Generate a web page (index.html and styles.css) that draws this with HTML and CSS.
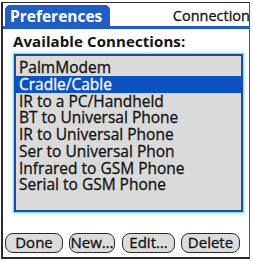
FILE: index.html
```html
<!DOCTYPE html>
<html>
<head>
<meta charset="utf-8">
<link rel="stylesheet" href="styles.css">
</head>
<body>
<div class="window">
  <div class="titlebar">
    <div class="tab">Preferences</div>
    <div class="panel">Connection</div>
  </div>
  <div class="label">Available Connections:</div>
  <div class="list">
    <div class="item">PalmModem</div>
    <div class="item selected">Cradle/Cable</div>
    <div class="item">IR to a PC/Handheld</div>
    <div class="item">BT to Universal Phone</div>
    <div class="item">IR to Universal Phone</div>
    <div class="item">Ser to Universal Phon</div>
    <div class="item">Infrared to GSM Phone</div>
    <div class="item">Serial to GSM Phone</div>
  </div>
  <div class="buttons">
    <div class="btn b-done">Done</div>
    <div class="btn b-new">New…</div>
    <div class="btn b-edit">Edit…</div>
    <div class="btn b-delete">Delete</div>
  </div>
</div>
</body>
</html>
```

FILE: styles.css
```css
html, body {
  margin: 0;
  padding: 0;
  background: #ffffff;
}
body {
  width: 253px;
  height: 262px;
  overflow: hidden;
  font-family: "Open Sans", "Noto Sans", sans-serif;
  color: #111;
}
.window {
  margin: 2px 2px 0 1px;
  width: 249px;
  height: 257px;
  box-sizing: border-box;
  border-left: 2px solid #2a2a2a;
  border-right: 1px solid #555;
  border-bottom: 2px solid #2a2a2a;
  border-top: 1px solid #2a2a2a;
  display: flex;
  flex-direction: column;
}
.titlebar {
  display: flex;
  align-items: flex-end;
  justify-content: space-between;
  height: 23px;
  border-bottom: 3px solid #1f5fc5;
}
.tab {
  margin-left: 2px;
  height: 21px;
  width: 105px;
  box-sizing: border-box;
  background: #1f5fc5;
  color: #fff;
  font-weight: 700;
  font-size: 15.5px;
  line-height: 22px;
  padding-left: 5px;
  border-radius: 5px 5px 0 0;
}
.panel {
  font-size: 14.5px;
  line-height: 21px;
  margin-right: -1px;
  -webkit-text-stroke: 0.3px currentColor;
}
.label {
  font-weight: 700;
  font-size: 15px;
  line-height: 18px;
  margin: 3px 0 0 10px;
  letter-spacing: 0.1px;
}
.list {
  margin: 4px 0 0 11px;
  width: 229px;
  height: 158px;
  box-sizing: border-box;
  background: #dadada;
  border: 2px solid #1e4c9c;
  box-shadow: 0 0 0 1px #7fe0e8, 0 0 2px 2px #b8f0f2;
  padding: 3px 0 0 0;
}
.item {
  height: 16.75px;
  line-height: 16.75px;
  font-size: 15.5px;
  padding-left: 3px;
  white-space: nowrap;
  -webkit-text-stroke: 0.3px currentColor;
}
.item.selected {
  background: #0c52c2;
  color: #fff;
}
.buttons {
  display: flex;
  margin: 21px 0 0 2px;
}
.btn {
  height: 20px;
  box-sizing: border-box;
  border: 1.5px solid #2b2b2b;
  border-radius: 8px;
  background: #dcdcdc;
  font-size: 15px;
  line-height: 17px;
  text-align: center;
  -webkit-text-stroke: 0.3px currentColor;
}
.b-done { width: 58px; }
.b-new { width: 46px; margin-left: 6px; }
.b-edit { width: 53px; margin-left: 7px; }
.b-delete { width: 59px; margin-left: 6px; }
```
